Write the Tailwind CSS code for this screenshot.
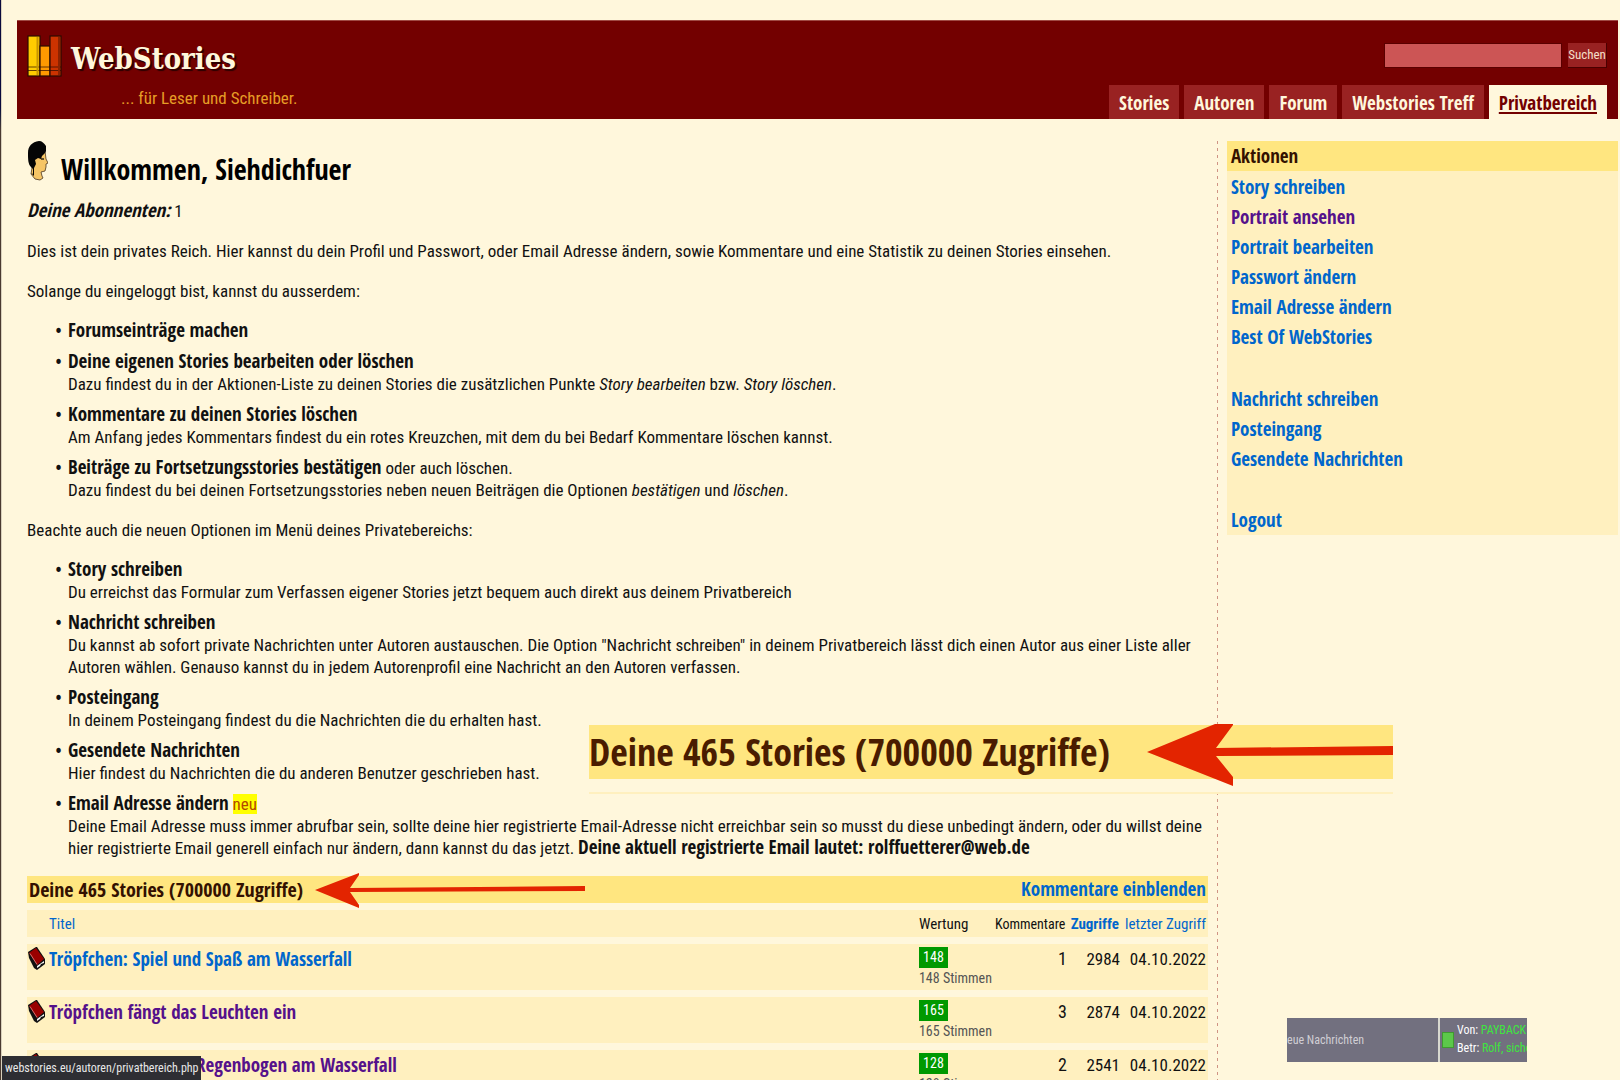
<!DOCTYPE html>
<html lang="de">
<head>
<meta charset="utf-8">
<title>WebStories – Privatbereich</title>
<script src="https://cdn.jsdelivr.net/npm/@tailwindcss/browser@4"></script>
</head>
<body class="relative h-screen overflow-hidden bg-[#fff7dc] font-['Roboto_Condensed','Liberation_Sans',sans-serif] text-[17px] leading-[22px] text-[#111]">
<div class="fixed inset-y-0 left-0 w-[2px] border-r border-[#d8d0bc] bg-linear-to-b from-[#0a0a3c] from-10% to-[#4a3a30] to-12%"></div>

<header class="mt-[20px] mr-[2px] ml-[17px] flex h-[99px] justify-between border-t border-[#a04a44] bg-[#730000]">
  <div class="pt-[14px] pl-[10px]">
    <a href="#" class="flex items-start gap-[9px]">
      <svg class="h-[42px] w-[35px]" viewBox="0 0 35 42" aria-hidden="true">
        <g stroke="#2b0a00" stroke-width="1.2">
          <rect x="1" y="1" width="12" height="40" fill="#ffcc00"/>
          <rect x="13" y="11" width="10" height="30" fill="#ff9900"/>
          <rect x="23" y="1" width="11" height="40" fill="#cc3300"/>
          <path d="M1 32h33M1 35.500h33" stroke-width="1" opacity=".7"/>
        </g>
        <path d="M10.500 2v38" stroke="#c89600" stroke-width="2"/>
        <path d="M32 2v38" stroke="#8c2300" stroke-width="2"/>
      </svg>
      <span class="font-['DejaVu_Serif_Condensed','DejaVu_Serif',serif] text-[29px] leading-[48px] font-bold text-[#fff7dc] [text-shadow:2px_2px_1px_#2a0000]">WebStories</span>
    </a>
    <p class="pl-[94px] text-[17px] leading-[30px] text-[#e69d26]">... für Leser und Schreiber.</p>
  </div>
  <div class="flex flex-col items-end justify-between pt-[22px] pr-[11px]">
    <form class="flex gap-[6px]">
      <input type="text" aria-label="Suche" class="h-[25px] w-[178px] border border-[#5a0000] bg-[#cc5555] px-1 text-white">
      <button type="button" class="h-[25px] w-[39px] border-r border-b border-[#4a0000] bg-[#992222] text-center text-[13px] leading-[22px] text-[#f5dfc8]">Suchen</button>
    </form>
    <nav class="flex h-[34px] gap-[5px] font-['Open_Sans_Condensed','Roboto_Condensed',sans-serif] text-[19px] leading-[36px] font-bold text-[#fff7dc]">
      <a href="#" class="bg-[#992222] px-[10px]">Stories</a>
      <a href="#" class="bg-[#992222] px-[10px]">Autoren</a>
      <a href="#" class="bg-[#992222] px-[10px]">Forum</a>
      <a href="#" class="bg-[#992222] px-[10px]">Webstories Treff</a>
      <a href="#" class="bg-[#fff7dc] px-[10px] text-[#730000] underline decoration-2 underline-offset-2">Privatbereich</a>
    </nav>
  </div>
</header>

<div class="mt-[22px] mr-[2px] ml-[27px] grid grid-cols-[302fr_1px_100fr] gap-x-[9px]">
  <main class="[&_b]:font-['Open_Sans_Condensed','Roboto_Condensed',sans-serif] [&_b]:text-[19px] [&_b]:leading-none">
    <div class="flex h-[59px] gap-[13px]">
      <svg class="h-[40px] w-[21px]" viewBox="0 0 21 40" aria-hidden="true">
        <path d="M18 10l1 8 2 4-2 1v3l-1 4-4 1 1 4 1 2-3 2-5-1-4-5 1-6-1-8 6-8z" fill="#f6c566" stroke="#4a3520" stroke-width=".8"/>
        <path d="M12 0C5 1 1 5 1 12c0 6 0 11 3 14l2 2v5l-2-1 3 3V27l2-4-1-4 3-2 3 1 1-3 3-3 1-2V5c-2-3-4-5-7-5z" fill="#050505"/>
        <path d="M14 18h3" stroke="#000" stroke-width="1.200"/>
      </svg>
      <h1 class="pt-[10px] font-['Open_Sans_Condensed','Roboto_Condensed',sans-serif] text-[28px] leading-[36px] font-bold text-black">Willkommen, Siehdichfuer</h1>
    </div>
    <p><b class="italic">Deine Abonnenten:</b> 1</p>
    <p class="mt-[18px]">Dies ist dein privates Reich. Hier kannst du dein Profil und Passwort, oder Email Adresse ändern, sowie Kommentare und eine Statistik zu deinen Stories einsehen.</p>
    <p class="mt-[18px]">Solange du eingeloggt bist, kannst du ausserdem:</p>
    <ul class="mt-[18px] flex list-['•_'] flex-col gap-[9px] pl-[41px] marker:font-['DejaVu_Sans_Condensed']">
      <li><b>Forumseinträge machen</b></li>
      <li><b>Deine eigenen Stories bearbeiten oder löschen</b><br>Dazu findest du in der Aktionen-Liste zu deinen Stories die zusätzlichen Punkte <i>Story bearbeiten</i> bzw. <i>Story löschen</i>.</li>
      <li><b>Kommentare zu deinen Stories löschen</b><br>Am Anfang jedes Kommentars findest du ein rotes Kreuzchen, mit dem du bei Bedarf Kommentare löschen kannst.</li>
      <li><b>Beiträge zu Fortsetzungsstories bestätigen</b> oder auch löschen.<br>Dazu findest du bei deinen Fortsetzungsstories neben neuen Beiträgen die Optionen <i>bestätigen</i> und <i>löschen</i>.</li>
    </ul>
    <p class="mt-[18px]">Beachte auch die neuen Optionen im Menü deines Privatebereichs:</p>
    <ul class="mt-[18px] flex list-['•_'] flex-col gap-[9px] pl-[41px] marker:font-['DejaVu_Sans_Condensed']">
      <li><b>Story schreiben</b><br>Du erreichst das Formular zum Verfassen eigener Stories jetzt bequem auch direkt aus deinem Privatbereich</li>
      <li><b>Nachricht schreiben</b><br>Du kannst ab sofort private Nachrichten unter Autoren austauschen. Die Option "Nachricht schreiben" in deinem Privatbereich lässt dich einen Autor aus einer Liste aller<br>Autoren wählen. Genauso kannst du in jedem Autorenprofil eine Nachricht an den Autoren verfassen.</li>
      <li><b>Posteingang</b><br>In deinem Posteingang findest du die Nachrichten die du erhalten hast.</li>
      <li><b>Gesendete Nachrichten</b><br>Hier findest du Nachrichten die du anderen Benutzer geschrieben hast.</li>
      <li><b>Email Adresse ändern</b> <mark class="bg-[#ffff00] text-[#b34700]">neu</mark><br>Deine Email Adresse muss immer abrufbar sein, sollte deine hier registrierte Email-Adresse nicht erreichbar sein so musst du diese unbedingt ändern, oder du willst deine<br>hier registrierte Email generell einfach nur ändern, dann kannst du das jetzt. <b>Deine aktuell registrierte Email lautet: rolffuetterer@web.de</b></li>
    </ul>

    <div class="mt-[17px] flex justify-between bg-[#ffe680] px-[2px] font-['Open_Sans_Condensed','Roboto_Condensed',sans-serif] text-[19px] leading-[27px] font-bold">
      <h2 class="text-[20px] text-[#331100]">Deine 465 Stories (700000 Zugriffe)</h2>
      <a href="#" class="text-[#0066cc]">Kommentare einblenden</a>
    </div>
    <table class="w-full table-fixed border-separate border-spacing-x-0 border-spacing-y-[7px] whitespace-nowrap">
      <colgroup><col class="w-[22px]"><col><col class="w-[76px]"><col class="w-[72px]"><col class="w-[54px]"><col class="w-[87px]"></colgroup>
      <thead>
        <tr class="h-[27px] bg-[#fff0bf] text-[15px] [&>th]:p-0 [&>th]:font-normal">
          <th></th>
          <th class="text-left"><a href="#" class="text-[#0066cc]">Titel</a></th>
          <th class="text-left">Wertung</th>
          <th class="pr-[2px]! text-right text-[14px]">Kommentare</th>
          <th class="pr-[2px]! text-right"><a href="#" class="font-bold text-[#0066cc]">Zugriffe</a></th>
          <th class="pr-[2px]! text-right"><a href="#" class="text-[#0066cc]">letzter Zugriff</a></th>
        </tr>
      </thead>
      <tbody id="stories"></tbody>
    </table>
  </main>

  <div class="bg-[repeating-linear-gradient(to_bottom,#cf9384_0_3px,transparent_3px_7px)]"></div>

  <aside class="self-start bg-[#fff0bf] font-['Open_Sans_Condensed','Roboto_Condensed',sans-serif] text-[19px] leading-[30px] font-bold text-[#0066cc]">
    <h2 class="bg-[#ffe680] pl-1 text-[#331100]">Aktionen</h2>
    <ul class="pt-px pl-1">
      <li><a href="#">Story schreiben</a></li>
      <li><a href="#" class="text-[#55118b]">Portrait ansehen</a></li>
      <li><a href="#">Portrait bearbeiten</a></li>
      <li><a href="#">Passwort ändern</a></li>
      <li><a href="#">Email Adresse ändern</a></li>
      <li><a href="#">Best Of WebStories</a></li>
    </ul>
    <ul class="mt-8 pl-1">
      <li><a href="#">Nachricht schreiben</a></li>
      <li><a href="#">Posteingang</a></li>
      <li><a href="#">Gesendete Nachrichten</a></li>
    </ul>
    <ul class="mt-[31px] pl-1">
      <li><a href="#">Logout</a></li>
    </ul>
  </aside>
</div>

<!-- enlarged heading with its arrow -->
<div class="absolute top-[725px] left-[589px] w-[804px] bg-[#fff7dc]">
  <div class="h-[54px] bg-[#ffe680] font-['Open_Sans_Condensed','Roboto_Condensed',sans-serif] text-[38px] leading-[52px] font-bold text-[#4a1c00]">Deine 465 Stories (700000 Zugriffe)</div>
  <div class="mt-[13px] h-[2px] bg-[#fff0bf]"></div>
</div>
<svg class="absolute top-[724px] left-[1147px] h-[63px] w-[246px]" viewBox="0 0 246 63" aria-hidden="true">
  <path d="M0 28L68 0h18v1L69 24l177-2v9L69 32l17 21v9z" fill="#e32400"/>
</svg>
<svg class="absolute top-[872px] left-[315px] h-[36px] w-[270px]" viewBox="0 0 270 36" aria-hidden="true">
  <path d="M0 18L44 1v2l-9 13 235-2v5L35 20l9 13v3z" fill="#e32400"/>
</svg>

<!-- mail notification -->
<div class="absolute top-[1018px] left-[1287px] flex h-[44px] w-[240px] overflow-hidden bg-[#72707f] text-[12px] leading-[18px] whitespace-nowrap text-white">
  <div class="w-[153px] shrink-0 border-r-2 border-[#d8d8d0] leading-[44px] text-[#d0ced4]">eue Nachrichten</div>
  <div class="m-[2px] mt-[14px] h-[16px] w-[12px] shrink-0 border border-[#3f9a30] bg-[#5cc84a]"></div>
  <div class="pt-[3px] pl-[1px]">
    <div>Von: <span class="text-[#3ee63e]">PAYBACK</span></div>
    <div>Betr: <span class="text-[#3ee63e]">Rolf, siche</span></div>
  </div>
</div>

<!-- link address in the status bar -->
<div class="fixed bottom-0 left-[2px] bg-[#2e2e33] pr-[2px] pl-[3px] text-[12px] leading-[24px] whitespace-nowrap text-[#e8e8e8]">webstories.eu/autoren/privatbereich.php</div>

<script>
const stories = [
  { title: 'Tröpfchen: Spiel und Spaß am Wasserfall', cls: 'text-[#0066cc]', votes: 148, comments: 1, hits: 2984 },
  { title: 'Tröpfchen fängt das Leuchten ein', cls: 'text-[#55118b]', votes: 165, comments: 3, hits: 2874 },
  { title: 'Regenbogen am Wasserfall', cls: 'pl-[147px] text-[#55118b]', votes: 128, comments: 2, hits: 2541 },
];
const book = `<svg class="ml-[1px] h-[24px] w-[18px]" viewBox="0 0 18 24" aria-hidden="true">
  <path d="M0 5L8 0h1l8 12v5l-8 6L6 21 1 11z" fill="#111"/>
  <path d="M1 6l7-5 8 11-7 6z" fill="#990000"/>
  <path d="M2 6.500l7 11" stroke="#e8a0a0" stroke-width=".7"/>
  <path d="M9 19l7-5v2l-3 1-1 2-3 2z" fill="#f4f4f4"/></svg>`;
document.getElementById('stories').innerHTML = stories.map(s => `
  <tr class="h-[46px] bg-[#fff0bf] align-top leading-[30px] [&>td]:p-0">
    <td class="pt-[3px]!">${book}</td>
    <td class="text-[19px]"><a href="#" class="font-['Open_Sans_Condensed','Roboto_Condensed',sans-serif] font-bold ${s.cls}">${s.title}</a></td>
    <td class="pt-[3px]! text-[14px] leading-[21px]"><div class="w-[29px] bg-[#009900] text-center text-white">${s.votes}</div><div class="text-[#555]">${s.votes} Stimmen</div></td>
    <td class="text-right text-[18px]">${s.comments}</td>
    <td class="pr-[1px]! text-right text-[17px]">${s.hits}</td>
    <td class="pr-[2px]! text-right text-[17px]">04.10.2022</td>
  </tr>`).join('');
</script>
</body>
</html>
